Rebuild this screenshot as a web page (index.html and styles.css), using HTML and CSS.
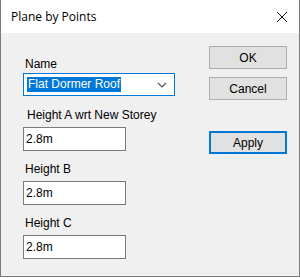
FILE: index.html
```html
<!DOCTYPE html>
<html>
<head>
	<meta charset="utf-8">
	<title>Plane by Points</title>
	<link rel="stylesheet" href="styles.css">
</head>
<body>
	<div class="dialog">
		<div class="titlebar">
			<span class="title">Plane by Points</span>
			<svg class="close" width="12" height="12" viewBox="0 0 12 12">
				<path d="M1 1 L11 11 M11 1 L1 11" stroke="#111" stroke-width="1" fill="none"/>
			</svg>
		</div>
		<div class="content">
			<div class="fields">
				<label class="lbl">Name</label>
				<div class="combo">
					<span class="sel">Flat Dormer Roof</span>
					<svg class="arrow" width="10" height="6" viewBox="0 0 10 6">
						<path d="M1 1 L5 5 L9 1" stroke="#555" stroke-width="1.2" fill="none"/>
					</svg>
				</div>
				<label class="lbl lbl-a">Height A wrt New Storey</label>
				<div class="box">2.8m</div>
				<label class="lbl">Height B</label>
				<div class="box">2.8m</div>
				<label class="lbl">Height C</label>
				<div class="box">2.8m</div>
			</div>
			<div class="buttons">
				<button class="btn">OK</button>
				<button class="btn">Cancel</button>
				<button class="btn btn-default">Apply</button>
			</div>
		</div>
	</div>
</body>
</html>
```

FILE: styles.css
```css
body
{
	margin: 0;
	font-family: "Liberation Sans", Arial, sans-serif;
	font-size: 12px;
	color: #000;
}
.dialog
{
	width: 298px;
	height: 276px;
	border: 1px solid #7a7a7a;
	border-top: none;
	background: #f0f0f0;
	display: flex;
	flex-direction: column;
}
.titlebar
{
	height: 33px;
	background: #fff;
	display: flex;
	align-items: center;
	justify-content: space-between;
	padding: 0 11px 0 10px;
}
.title
{
	font-family: "Open Sans", sans-serif;
	font-size: 12px;
	color: #000;
}
.content
{
	display: flex;
	padding: 0 0 0 22px;
}
.fields
{
	display: flex;
	flex-direction: column;
	width: 152px;
	padding-top: 24px;
}
.lbl
{
	height: 14px;
	line-height: 14px;
	margin-left: 2px;
}
.lbl-a
{
	margin-left: 4px;
	margin-top: 12px;
}
.combo
{
	margin-top: 2px;
	height: 21px;
	border: 1px solid #0078d7;
	background: #fff;
	display: flex;
	align-items: center;
	justify-content: space-between;
	padding: 0 7px 0 3px;
}
.sel
{
	background: #0078d7;
	color: #fff;
	line-height: 15px;
	padding: 0 1px;
}
.box
{
	width: 99px;
	height: 22px;
	border: 1px solid #7a7a7a;
	background: #fff;
	line-height: 22px;
	padding-left: 2px;
	box-sizing: content-box;
	margin-top: 5px;
	margin-bottom: 11px;
}
.buttons
{
	display: flex;
	flex-direction: column;
	margin-left: 34px;
	padding-top: 13px;
}
.btn
{
	width: 78px;
	height: 23px;
	background: #e1e1e1;
	border: 1px solid #adadad;
	font-family: "Liberation Sans", Arial, sans-serif;
	font-size: 12px;
	color: #000;
	padding: 0;
	margin-bottom: 8px;
}
.btn-default
{
	margin-top: 23px;
	border: 2px solid #0078d7;
}
```
